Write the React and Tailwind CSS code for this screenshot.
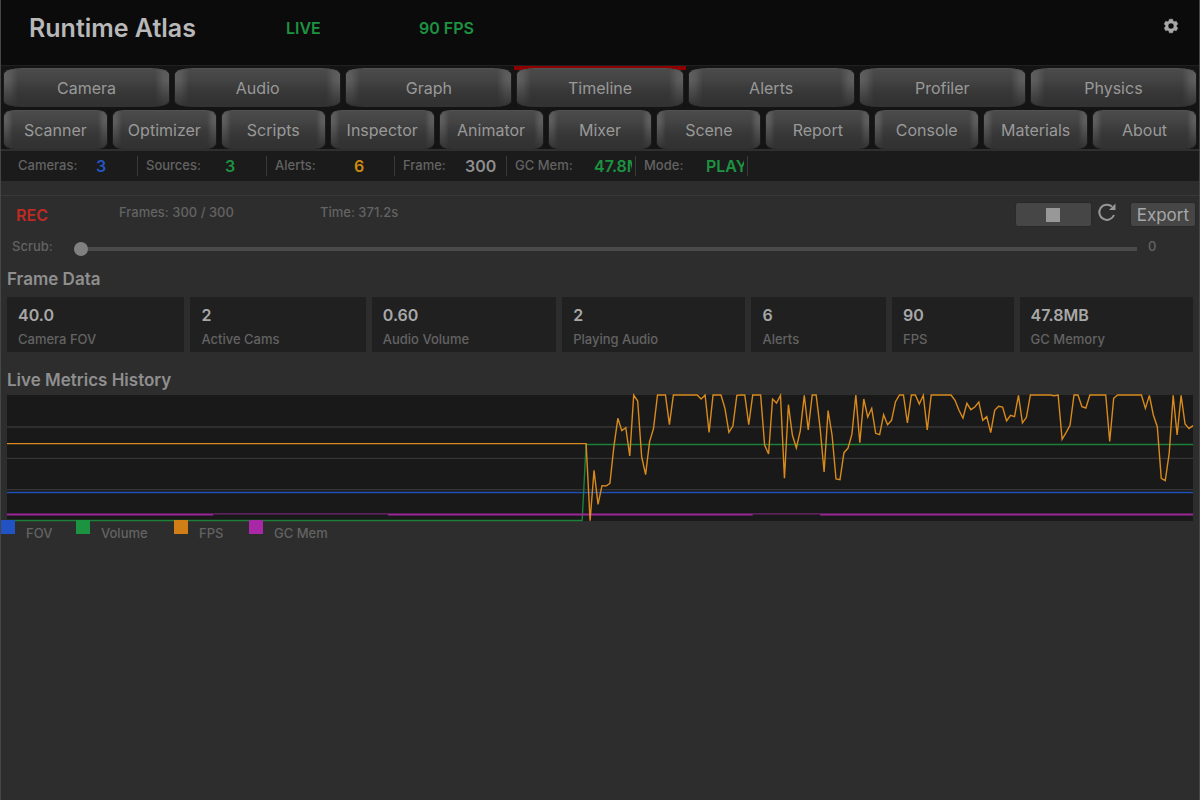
import React from "react";

const primaryTabs = ["Camera", "Audio", "Graph", "Timeline", "Alerts", "Profiler", "Physics"];
const secondaryTabs = [
  "Scanner", "Optimizer", "Scripts", "Inspector", "Animator", "Mixer",
  "Scene", "Report", "Console", "Materials", "About",
];

const stats = [
  { label: "Cameras:", value: "3", box: "w-[137px] pl-[17px]", labelBox: "w-[78px]", color: "text-[#2456c4]" },
  { label: "Sources:", value: "3", box: "w-[129px] pl-2", labelBox: "w-[79px]", color: "text-[#1d9341]" },
  { label: "Alerts:", value: "6", box: "w-[128px] pl-2", labelBox: "w-[79px]", color: "text-[#cf8a12]" },
  { label: "Frame:", value: "300", box: "w-[112px] pl-2", labelBox: "w-[62px]", color: "text-[#8e8e8e]" },
  { label: "GC Mem:", value: "47.8MB", box: "w-[129px] pl-2", labelBox: "w-[79px]", color: "text-[#1d9341]" },
  { label: "Mode:", value: "PLAY", box: "w-[112px] pl-2", labelBox: "w-[62px]", color: "text-[#1d9341]" },
];

const cards = [
  { value: "40.0", label: "Camera FOV" },
  { value: "2", label: "Active Cams" },
  { value: "0.60", label: "Audio Volume" },
  { value: "2", label: "Playing Audio" },
  { value: "6", label: "Alerts" },
  { value: "90", label: "FPS" },
  { value: "47.8MB", label: "GC Memory" },
];

const legend = [
  { label: "FOV", color: "bg-[#2153c4]", box: "w-[75px]" },
  { label: "Volume", color: "bg-[#1c9340]", box: "w-[98px]" },
  { label: "FPS", color: "bg-[#cf7f15]", box: "w-[75px]" },
  { label: "GC Mem", color: "bg-[#a928a6]", box: "w-[98px]" },
];

// Chart depth per frame, from frame 146 to frame 299 (0 = top, 378 = bottom).
const FIRST_FRAME = 146;
const fps = [
  146, 377, 226, 328, 272, 273, 265, 155, 70, 107, 98, 183, 0, 18, 185, 239, 140, 100, 0, 0, 0, 89,
  0, 0, 0, 0, 0, 0, 0, 12, 0, 112, 0, 0, 0, 40, 112, 93, 1, 0, 0, 89, 0, 0, 0, 150, 177, 12, 24, 1,
  250, 29, 120, 159, 107, 1, 105, 0, 0, 100, 231, 47, 120, 252, 254, 173, 160, 118, 0, 143, 12, 66,
  40, 115, 119, 59, 89, 76, 20, 0, 0, 84, 0, 0, 27, 1, 105, 0, 0, 0, 0, 0, 0, 16, 46, 69, 25, 44, 36,
  21, 76, 65, 113, 46, 34, 36, 78, 61, 65, 1, 84, 67, 0, 0, 0, 0, 0, 0, 2, 0, 133, 113, 91, 0, 0, 35,
  39, 0, 0, 0, 0, 0, 139, 10, 0, 0, 0, 0, 0, 0, 0, 40, 1, 60, 95, 250, 257, 175, 1, 120, 1, 87, 101,
  92,
];
const fpsPoints = ["0,146", ...fps.map((y, i) => `${FIRST_FRAME + i},${y}`)].join(" ");

function Tab({ label, active, wide }) {
  return (
    <li className={`min-w-0 flex-1 border-t-2 px-[2px] ${active ? "border-[#8c0000] bg-[linear-gradient(#8c0000,#8c0000)] bg-[length:100%_2px] bg-no-repeat" : "border-transparent"}`}>
      <button
        type="button"
        aria-current={active ? "page" : undefined}
        className={`h-[39px] w-full border-x border-t border-x-[#1c1c1c] border-t-[#525252] text-base font-normal text-[#999999] ${
          wide
            ? "rounded-[20px/6px] bg-[linear-gradient(transparent_30%,#323232_100%),linear-gradient(to_right,#606060_0,#5a5a5a_6px,transparent_14px,transparent_calc(100%-14px),#5a5a5a_calc(100%-6px),#606060_100%),linear-gradient(#4b4b4b,#323232)]"
            : "rounded-[12px/6px] bg-[linear-gradient(transparent_30%,#323232_100%),linear-gradient(to_right,#606060_0,#5a5a5a_4px,transparent_9px,transparent_calc(100%-9px),#5a5a5a_calc(100%-4px),#606060_100%),linear-gradient(#4b4b4b,#323232)]"
        }`}
      >
        {label}
      </button>
    </li>
  );
}

export default function App() {
  return (
    <div className="min-h-screen border-x border-[#454648] bg-[#2d2d2d] font-['Inter',sans-serif] text-[13px] font-medium text-[#636363]">
      <header className="flex h-[65px] items-start bg-[#0b0b0b] pr-5 pl-7">
        <h1 className="mt-3 w-[257px] text-[25px] leading-8 font-semibold text-[#b8b8b8]">Runtime Atlas</h1>
        <span className="mt-4 w-[133px] text-base font-semibold text-[#1d9341]">LIVE</span>
        <span className="mt-4 text-base font-semibold text-[#1d9341]">90 FPS</span>
        <button type="button" aria-label="Settings" className="mt-[18px] ml-auto text-[#a8a8a8]">
          <svg viewBox="0 0 16 16" className="h-4 w-4" aria-hidden="true">
            <path
              fill="currentColor"
              stroke="currentColor"
              strokeWidth="0.5"
              strokeLinejoin="round"
              fillRule="evenodd"
              d="M6.3 1.200h3.400l.4 1.900 1.200.7 1.900-.6 1.600 2.700L13.500 7.300v1.400l1.300 1.400-1.600 2.700-1.900-.6-1.200.7-.4 1.900H6.300l-.4-1.900-1.200-.7-1.900.6-1.600-2.700L2.500 8.700V7.300L1.200 5.900 2.800 3.200l1.900.6 1.200-.7zM8 5a3 3 0 1 0 0 6 3 3 0 0 0 0-6z"
            />
          </svg>
        </button>
      </header>

      <nav aria-label="Tools" className="bg-[#141414]">
        <ul className="flex border-t border-[#202020] pb-px">
          {primaryTabs.map((t) => <Tab key={t} label={t} active={t === "Timeline"} wide />)}
        </ul>
        <ul className="flex border-b-2 border-[#2f2f2f]">
          {secondaryTabs.map((t) => <Tab key={t} label={t} />)}
        </ul>
      </nav>

      <dl className="flex h-[30px] items-center bg-[#1b1b1b]">
        {stats.map((s) => (
          <div key={s.label} className={`flex h-5 shrink-0 items-center overflow-hidden border-r border-[#3a3a3a] ${s.box}`}>
            <dt className={`shrink-0 ${s.labelBox}`}>{s.label}</dt>
            <dd className={`mr-[3px] overflow-hidden text-base leading-5 font-semibold ${s.color}`}>{s.value}</dd>
          </div>
        ))}
      </dl>

      <main className="mt-[14px] border-t border-[#383838] px-[6px]">
        <div className="flex h-[37px] items-center">
          <strong className="w-[103px] pl-[9px] text-base font-semibold text-[#c02a24]">REC</strong>
          <span className="w-[201px] pb-1 pl-[9px]">Frames: 300 / 300</span>
          <span className="pb-1 pl-[9px]">Time: 371.2s</span>
          <button type="button" aria-label="Stop" className="ml-auto flex h-[25px] w-[77px] items-center justify-center rounded-[3px] border border-[#292929] bg-[#464646]">
            <span className="size-[14px] bg-[#989898]" />
          </button>
          <button type="button" aria-label="Restart" className="mx-[5px] mb-[6px] text-[#989898]">
            <svg viewBox="0 0 20 20" className="h-5 w-5" aria-hidden="true">
              <path d="M17 13A7.600 7.600 0 1 1 15 4.600" fill="none" stroke="currentColor" strokeWidth="2" />
              <path d="M18.500 1.500v6.500H12z" fill="currentColor" />
            </svg>
          </button>
          <button type="button" className="-mr-[3px] ml-2 h-[25px] rounded-[3px] border border-[#292929] bg-[#464646] px-[6px] text-[17px] leading-5 font-normal text-[#a8a8a8]">
            Export
          </button>
        </div>

        <div className="flex h-[31px] items-center">
          <label htmlFor="scrub" className="w-[67px] pb-1 pl-[5px]">Scrub:</label>
          <input
            id="scrub"
            type="range"
            min="0"
            max="299"
            defaultValue="0"
            className="h-4 min-w-0 flex-1 appearance-none bg-[linear-gradient(#4a4a4a,#4a4a4a)] bg-[length:100%_4px] bg-center bg-no-repeat [&::-webkit-slider-thumb]:size-[14px] [&::-webkit-slider-thumb]:appearance-none [&::-webkit-slider-thumb]:rounded-full [&::-webkit-slider-thumb]:bg-[#808080]"
          />
          <output htmlFor="scrub" className="w-14 pb-1 pl-[11px]">0</output>
        </div>

        <h2 className="mt-px mb-1 text-[17px] leading-7 font-semibold text-[#8f8f8f]">Frame Data</h2>
        <dl className="grid grid-cols-[178fr_176fr_185fr_184fr_135fr_122fr_174fr] gap-[6px]">
          {cards.map((c) => (
            <div key={c.label} className="flex h-[55px] flex-col-reverse justify-end bg-[#202020] pt-[6px] pl-[11px]">
              <dt className="leading-6">{c.label}</dt>
              <dd className="text-base leading-6 font-semibold text-[#a8a8a8]">{c.value}</dd>
            </div>
          ))}
        </dl>

        <h2 className="mt-[14px] mb-px text-[17px] leading-7 font-semibold text-[#8f8f8f]">Live Metrics History</h2>
        <svg
          viewBox="0 0 299 378"
          preserveAspectRatio="none"
          role="img"
          aria-label="Live metrics history"
          className="block h-[126px] w-full overflow-visible bg-[#191919] [&_*]:[vector-effect:non-scaling-stroke]"
          fill="none"
          strokeWidth="1.4"
        >
          <path d="M0 96H299M0 190H299M0 284H299" stroke="#363636" />
          <path d="M0 292.500H299" stroke="#2150b4" />
          <path d="M0 376.500H145L146 148.500H299" stroke="#1d8038" />
          <path d="M0 358.500H52M96 358.500H188M205 358.500H299" stroke="#9c2799" strokeWidth="2" />
          <path d="M52 356.500H96M188 356.500H205" stroke="#742573" />
          <polyline points={fpsPoints} stroke="#d98a1c" />
        </svg>
      </main>

      <ul className="-mt-px flex">
        {legend.map((l) => (
          <li key={l.label} className={`flex ${l.box}`}>
            <span className={`mr-[11px] h-[14px] w-[14px] shrink-0 ${l.color}`} />
            <span className="pt-[3px] leading-5 whitespace-nowrap">{l.label}</span>
          </li>
        ))}
      </ul>
    </div>
  );
}
